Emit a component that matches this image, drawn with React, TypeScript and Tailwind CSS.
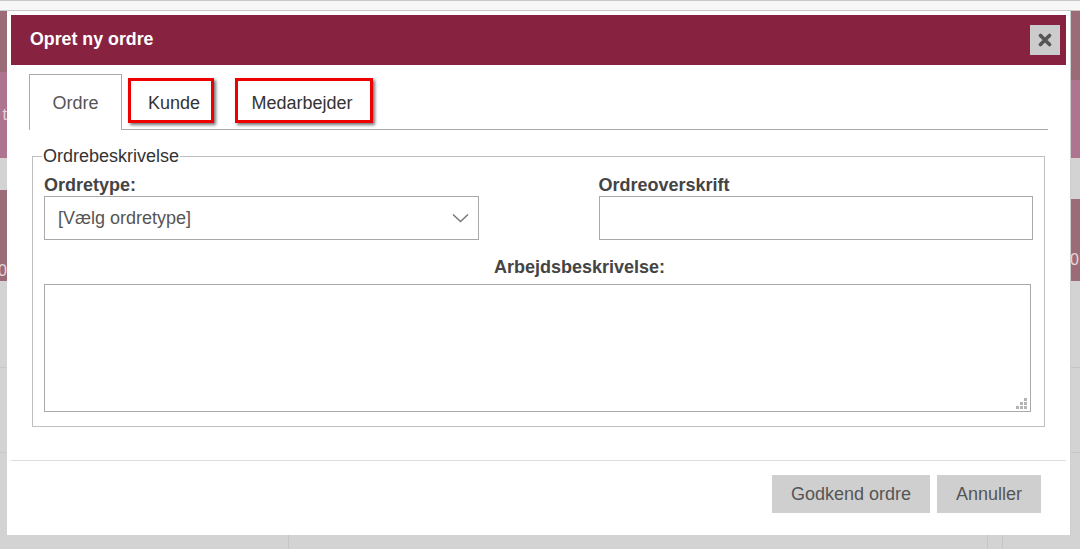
import React from "react";

function Backdrop() {
  return (
    <div className="absolute inset-0 flex flex-col">
      <div className="h-[11px] shrink-0 bg-[#f7f7f7] border-t border-b border-[#c8c8c8]" />
      <div className="flex flex-1">
        <div className="w-[7px] flex flex-col overflow-hidden text-[16px] text-[#e6d6dd]">
          <div className="h-[61px] bg-[#9b6b78]" />
          <div className="h-[86px] bg-[#ae7490] flex items-center justify-end leading-none">t</div>
          <div className="h-[32px] bg-[#d3d3d3]" />
          <div className="h-[91px] bg-[#9b6b78] flex items-end justify-end pb-[2px] leading-none">0</div>
          <div className="h-[87px] bg-[#d3d3d3] border-b border-[#c6c6c6]" />
          <div className="h-[85px] bg-[#d3d3d3] border-b border-[#c6c6c6]" />
          <div className="flex-1 bg-[#d3d3d3]" />
        </div>
        <div className="flex-1 bg-[#d3d3d3] flex">
          <div className="w-[281px]" />
          <div className="w-px bg-[#c6c6c6]" />
          <div className="w-[698px]" />
          <div className="w-px bg-[#c6c6c6]" />
          <div className="w-[14px]" />
          <div className="w-px bg-[#c6c6c6]" />
        </div>
        <div className="w-[10px] flex flex-col overflow-hidden text-[16px] text-[#e6d6dd]">
          <div className="h-[69px] bg-[#9b6b78]" />
          <div className="h-[78px] bg-[#ae7490]" />
          <div className="h-[41px] bg-[#d3d3d3]" />
          <div className="h-[82px] bg-[#9b6b78] flex items-center justify-start leading-none pt-[40px]">0</div>
          <div className="h-[87px] bg-[#d3d3d3] border-b border-[#c6c6c6]" />
          <div className="h-[85px] bg-[#d3d3d3] border-b border-[#c6c6c6]" />
          <div className="flex-1 bg-[#d3d3d3]" />
        </div>
      </div>
    </div>
  );
}

export default function App() {
  return (
    <div className="relative w-[1080px] h-[549px] overflow-hidden bg-[#d3d3d3] font-['Liberation_Sans',Arial,sans-serif]">
      <Backdrop />
      <div className="absolute left-[7px] top-[11px] w-[1064px] h-[524px] bg-white border-r border-[#cfcfcf] p-[4px] flex flex-col">
        <div className="h-[50px] shrink-0 bg-[#872341] flex items-center justify-between pl-[19px] pr-[6px]">
          <h1 className="text-white font-bold text-[17.8px] leading-none">Opret ny ordre</h1>
          <button className="w-[30px] h-[30px] bg-[#cccccc] flex items-center justify-center">
            <svg width="14" height="14" viewBox="0 0 14 14">
              <path d="M2.5 2.5 L11.5 11.5 M11.5 2.5 L2.5 11.5" stroke="#555" strokeWidth="3.6" strokeLinecap="round" fill="none" />
            </svg>
          </button>
        </div>

        <div className="mt-[9px] mx-[18px] flex items-start border-b border-[#aaaaaa] h-[56px]">
          <div className="w-[93px] h-[56px] -mb-px border border-b-0 border-[#aaaaaa] bg-white flex items-center justify-center text-[18px] text-[#555] pt-[2px]">
            Ordre
          </div>
          <div className="ml-[6px] mt-[4px] w-[86px] h-[45px] border-[3px] border-[#ee0000] shadow-[2px_2px_3px_rgba(0,0,0,0.55)] flex items-center justify-center pl-[6px] pt-[5px] text-[18px] text-[#333]">
            Kunde
          </div>
          <div className="ml-[21px] mt-[4px] w-[138px] h-[45px] border-[3px] border-[#ee0000] shadow-[2px_2px_3px_rgba(0,0,0,0.55)] flex items-center justify-center pr-[4px] pt-[5px] text-[18px] text-[#333]">
            Medarbejder
          </div>
        </div>

        <fieldset className="mt-[16px] mx-[21px] border border-[#c0c0c0] pl-[11px] pr-[11px] pt-[9px] pb-[14px]">
          <legend className="-ml-[2px] px-[1px] text-[18px] leading-[20px] text-[#333]">Ordrebeskrivelse</legend>
          <div className="grid grid-cols-2 gap-x-[120px]">
            <div>
              <div className="text-[18px] font-bold leading-[20px] text-[#444] mb-[1px]">Ordretype:</div>
              <div className="relative h-[44px] border border-[#aaaaaa] flex items-center pl-[13px] text-[18px] text-[#555]">
                [Vælg ordretype]
                <svg className="absolute right-[9px] top-[16px]" width="17" height="10" viewBox="0 0 17 10">
                  <path d="M1 1.5 L8.5 8.5 L16 1.5" stroke="#777" strokeWidth="1.5" fill="none" />
                </svg>
              </div>
            </div>
            <div>
              <div className="text-[18px] font-bold leading-[20px] text-[#444] mb-[1px]">Ordreoverskrift</div>
              <div className="h-[44px] border border-[#aaaaaa]" />
            </div>
          </div>
          <div className="mt-[17px] pl-[82px] text-center text-[18px] font-bold leading-[20px] text-[#444]">
            Arbejdsbeskrivelse:
          </div>
          <div className="relative mt-[7px] w-[987px] h-[128px] border border-[#aaaaaa]">
            <div className="absolute right-[3px] bottom-[2px] grid grid-cols-3 gap-[1px]">
              <div className="w-[3px] h-[3px]" />
              <div className="w-[3px] h-[3px]" />
              <div className="w-[3px] h-[3px] bg-[#b4b4b4]" />
              <div className="w-[3px] h-[3px]" />
              <div className="w-[3px] h-[3px] bg-[#b4b4b4]" />
              <div className="w-[3px] h-[3px] bg-[#b4b4b4]" />
              <div className="w-[3px] h-[3px] bg-[#b4b4b4]" />
              <div className="w-[3px] h-[3px] bg-[#b4b4b4]" />
              <div className="w-[3px] h-[3px] bg-[#b4b4b4]" />
            </div>
          </div>
        </fieldset>

        <div className="mt-[33px] h-px bg-[#dddddd]" />
        <div className="mt-[14px] flex justify-end gap-[7px] pr-[25px]">
          <button className="w-[158px] h-[38px] bg-[#cfcfcf] text-[18px] text-[#555]">Godkend ordre</button>
          <button className="w-[104px] h-[38px] bg-[#cfcfcf] text-[18px] text-[#555]">Annuller</button>
        </div>
      </div>
    </div>
  );
}
